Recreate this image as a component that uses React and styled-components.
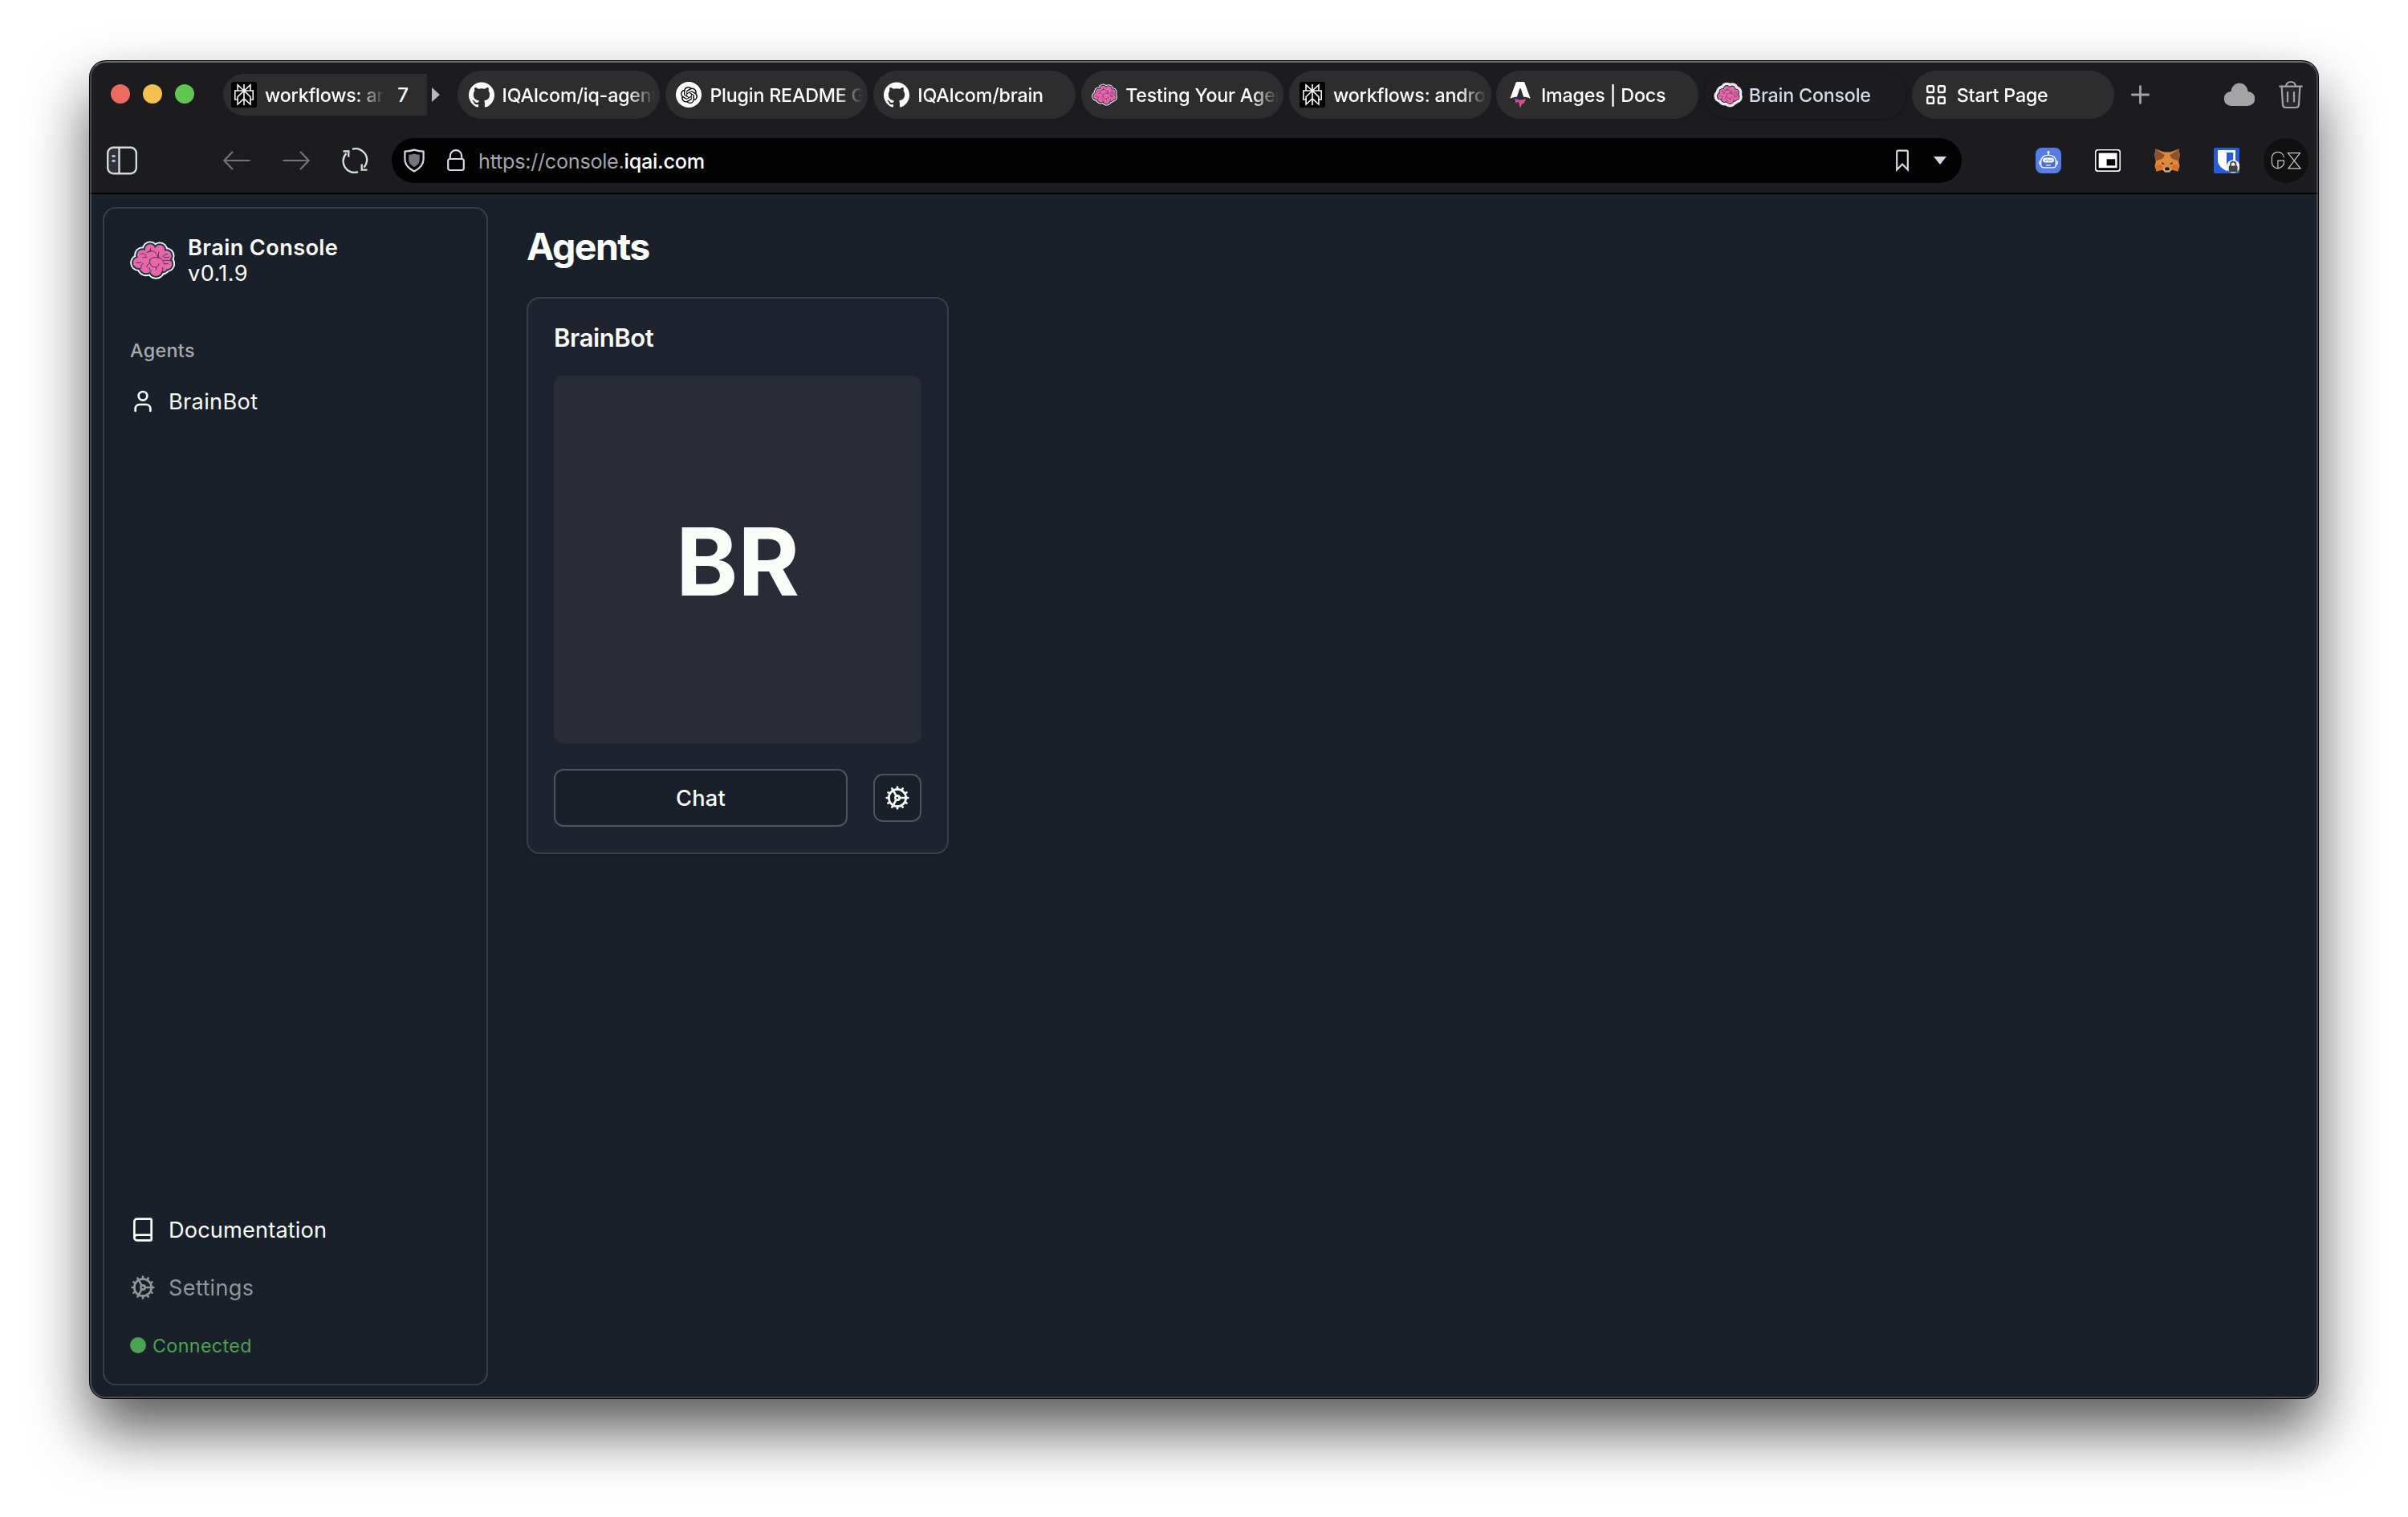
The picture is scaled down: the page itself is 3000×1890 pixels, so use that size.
import React from "react";
import styled, { createGlobalStyle, css } from "styled-components";
import { Book, Cog, User } from "lucide-react";
import { SiGithub, SiOpenai } from "react-icons/si";

const GlobalStyle = createGlobalStyle`
  * { box-sizing: border-box; }
  body {
    margin: 0;
    background: #fff;
    font-family: Inter, "Liberation Sans", sans-serif;
    -webkit-font-smoothing: antialiased;
  }
  svg { display: block; flex: none; }
`;

const colors = {
  chrome: "#1c1c1e",
  tab: "#2d2d2e",
  page: "#1a202a",
  card: "#1e232f",
  avatar: "#292c37",
  line: "#393f48",
  buttonLine: "#4e545c",
  text: "#fbfdf8",
};

const Desktop = styled.div`
  width: 3000px;
  height: 1890px;
  padding: 76px 112px 148px;
  overflow: hidden;
  background: #fff;
`;

const BrowserWindow = styled.div`
  position: relative;
  display: flex;
  flex-direction: column;
  height: 1666px;
  border-radius: 20px;
  overflow: hidden;
  background: ${colors.page};
  box-shadow: 0 0 0 1px #050505, 0 40px 76px rgba(0, 0, 0, 0.66);

  &::after {
    content: "";
    position: absolute;
    inset: 0;
    border-radius: inherit;
    border: 2px solid rgba(255, 255, 255, 0.2);
    border-top-color: rgba(255, 255, 255, 0.34);
    pointer-events: none;
  }
`;

const Chrome = styled.header`
  flex: none;
  height: 166px;
  background: ${colors.chrome};
  border-bottom: 2px solid #030304;
`;

const TabStrip = styled.div`
  display: flex;
  align-items: center;
  height: 84px;
  padding: 0 19px 0 26px;
`;

const Lights = styled.div`
  display: flex;
  gap: 16px;
  margin: 0 36px 2px 0;
`;

const Light = styled.span`
  width: 24px;
  height: 24px;
  border-radius: 50%;
  background: ${(p) => p.$color};
`;

const TabTitle = styled.span`
  flex: 1;
  min-width: 0;
  padding-top: 2px;
  overflow: hidden;
  white-space: nowrap;
  font-size: 23.25px;
  line-height: 32px;
  font-weight: 500;
  letter-spacing: -0.2px;
  mask-image: linear-gradient(to right, #000 calc(100% - 34px), transparent);
`;

const TabStack = styled.div`
  display: flex;
  align-items: center;
  width: 254px;
  height: 52px;
  padding: 0 23px 0 10px;
  gap: 10px;
  border-radius: 26px 0 0 26px;
  background: ${colors.tab};
  color: #fff;
`;

const StackCount = styled.span`
  padding: 1px 0 0 6px;
  font-size: 24px;
  font-weight: 500;
`;

const StackArrow = styled.span`
  margin: 0 22px 0 6px;
  border-left: 10px solid #b8b8b8;
  border-top: 9px solid transparent;
  border-bottom: 9px solid transparent;
`;

const Tabs = styled.div`
  display: flex;
  gap: 6.9px;
  margin-right: 21px;
`;

const Tab = styled.div`
  display: flex;
  align-items: center;
  gap: 10px;
  width: 252px;
  height: 60px;
  padding: 0 6px 0 13.5px;
  border-radius: 30px;
  background: ${colors.tab};
  color: #fff;
  ${(p) =>
    p.$active &&
    css`
      background: ${colors.chrome};
      color: #d5d9e3;
      box-shadow: 0 1px 4px rgba(0, 0, 0, 0.28);
    `}
`;

const Favicon = styled.span`
  display: flex;
  align-items: center;
  justify-content: center;
  flex: none;
  width: 32px;
  height: 32px;
  border-radius: ${(p) => (p.$round ? "50%" : "3px")};
  background: ${(p) => p.$bg || "transparent"};
  color: ${(p) => p.$fg || "#fff"};
`;

const StripActions = styled.div`
  display: flex;
  align-items: center;
  gap: 30px;
  margin-left: auto;
`;

const Toolbar = styled.div`
  display: flex;
  align-items: center;
  height: 80px;
  padding: 0 12px 0 21px;
`;

const NavButtons = styled.div`
  display: flex;
  align-items: center;
  gap: 40px;
  margin: 0 29px 0 107px;
`;

const AddressBar = styled.div`
  display: flex;
  align-items: center;
  flex: none;
  width: 1956px;
  height: 56px;
  padding: 0 19px 0 15px;
  border-radius: 28px;
  background: #020203;
`;

const Url = styled.span`
  margin: 0 auto 0 17px;
  padding-top: 2px;
  font-size: 25.2px;
  line-height: 32px;
  letter-spacing: -0.26px;
  color: #a4a6ac;
`;

const UrlHost = styled.span`
  font-weight: 500;
  color: #fff;
`;

const ShieldSlot = styled.span`
  margin-right: 28px;
`;

const CaretDown = styled.span`
  margin-left: 31px;
  border-top: 10px solid #d5d9e3;
  border-left: 8px solid transparent;
  border-right: 8px solid transparent;
`;

const Extensions = styled.div`
  display: flex;
  align-items: center;
  gap: 42px;
  margin: 0 30px 0 92px;
`;

const Profile = styled.div`
  display: flex;
  align-items: center;
  justify-content: center;
  width: 56px;
  height: 56px;
  border-radius: 50%;
  background: #101010;
`;

const Page = styled.div`
  display: flex;
  flex: 1;
  min-height: 0;
  padding: 16px;
  gap: 48px;
  background: ${colors.page};
  color: ${colors.text};
`;

const Sidebar = styled.aside`
  display: flex;
  flex-direction: column;
  flex: none;
  width: 480px;
  height: 1468px;
  padding: 16px;
  border: 2px solid ${colors.line};
  border-radius: 16px;
`;

const Brand = styled.div`
  display: flex;
  align-items: center;
  gap: 16px;
  height: 96px;
  padding: 0 16px;
`;

const BrandText = styled.div`
  display: flex;
  flex-direction: column;
  padding-top: 2px;
  font-size: 27.2px;
  line-height: 32px;
  letter-spacing: 0.36px;
`;

const BrandName = styled.span`
  font-weight: 600;
`;

const GroupLabel = styled.div`
  height: 64px;
  margin-top: 32px;
  padding: 0 16px;
  font-size: 23.25px;
  font-weight: 500;
  line-height: 65px;
  letter-spacing: 0.38px;
  color: #a9abaf;
`;

const NavItem = styled.a`
  display: flex;
  align-items: center;
  gap: 16px;
  height: 64px;
  padding: 0 16px;
  font-size: 27.2px;
  letter-spacing: ${(p) => p.$tracking || "0.3px"};
  opacity: ${(p) => (p.$muted ? 0.53 : 1)};
`;

const SidebarFooter = styled.div`
  display: flex;
  flex-direction: column;
  gap: 8px;
  margin-top: auto;
`;

const Status = styled.div`
  display: flex;
  align-items: center;
  gap: 8px;
  height: 64px;
  padding: 0 16px;
  font-size: 23.25px;
  letter-spacing: 0.38px;
  color: #4da254;
`;

const StatusDot = styled.span`
  width: 20px;
  height: 20px;
  border-radius: 50%;
  background: currentColor;
`;

const Main = styled.main`
  flex: 1;
  padding-top: 16px;
`;

const Heading = styled.h1`
  margin: 0 0 30px;
  font-size: 46.5px;
  line-height: 66px;
  font-weight: 700;
  letter-spacing: -1.6px;
`;

const Card = styled.section`
  display: flex;
  flex-direction: column;
  gap: 32px;
  width: 526px;
  padding: 32px;
  border: 2px solid ${colors.line};
  border-radius: 16px;
  background: ${colors.card};
  box-shadow: 0 2px 4px rgba(0, 0, 0, 0.12);
`;

const CardTitle = styled.h2`
  margin: 0;
  height: 32px;
  font-size: 31px;
  line-height: 34px;
  font-weight: 600;
  letter-spacing: -0.4px;
`;

const Avatar = styled.div`
  display: flex;
  align-items: center;
  justify-content: center;
  height: 458px;
  padding-top: 5px;
  border-radius: 12px;
  background: ${colors.avatar};
  font-size: 117px;
  font-weight: 700;
`;

const CardActions = styled.div`
  display: flex;
  align-items: center;
  gap: 32px;
`;

const Button = styled.button`
  display: flex;
  align-items: center;
  justify-content: center;
  padding: 0;
  border: 2px solid ${colors.buttonLine};
  border-radius: 12px;
  background: ${colors.page};
  color: ${colors.text};
  font: 500 27.2px Inter, sans-serif;
  letter-spacing: 0.3px;
  ${(p) =>
    p.$square
      ? css`
          width: 60px;
          height: 60px;
        `
      : css`
          flex: 1;
          height: 72px;
        `}
`;

const lobes = [
  [32, 82, 19], [46, 53, 18], [75, 32, 18], [111, 35, 18], [136, 56, 18],
  [137, 86, 19], [122, 98, 16], [97, 110, 21], [60, 98, 22], [75, 70, 35], [105, 75, 35],
];

const Lobes = ({ grow, fill }) => (
  <g fill={fill}>
    {lobes.map(([x, y, r], i) => (
      <circle key={i} cx={x} cy={y} r={r + grow} />
    ))}
  </g>
);

const Brain = ({ width, height, halo }) => (
  <svg width={width} height={height} viewBox={halo ? "-14 -12 196 168" : "0 0 168 144"}>
    {halo && <Lobes grow={25} fill="#e8e8ea" />}
    <Lobes grow={12.5} fill="#fff" />
    <Lobes grow={7} fill="#1d3449" />
    <Lobes grow={1} fill="#ec65a9" />
    <g fill="none" stroke="#1d3449" strokeWidth="2.6" strokeLinecap="round">
      <path d="M74 72c6-10 18-12 30-9 12 2 20 9 22 18M74 70c-2 16 6 30 22 29M98 108v-10c8-2 10-6 10-12" />
      <path d="M62 44c10-8 26-8 34 2 6 5 8 10 8 16M77 28v11M76 38l-8 4" />
      <path d="M38 50c10-6 20-2 22 8M48 62h14M108 42c-2 8-4 12 0 20" />
      <path d="M122 60c4-8 10-10 18-10M128 62l18-1M126 86h16M126 74c8-3 16 0 26 0" />
      <path d="M24 82h18M62 98c0-8 6-8 10-14M42 104c-2-8 0-16 8-20" />
      <path d="M80 114c-6-4-10-8-8-14M116 122c6-6 8-14 6-22" />
    </g>
  </svg>
);

const BurstMark = () => (
  <svg width="28" height="28" viewBox="0 0 24 24" fill="none" stroke="#f4f4f0" strokeWidth="1.4">
    <path d="M12 .8v22.4M5.2 1.6 12 7.7l6.8-6.1v6.1H5.2zM12 7.7H2.4v9.4h2.8M12 7.7h9.6v9.4h-2.8M12 7.7l-6.8 6.6v8l6.8-6.2 6.8 6.2v-8z" />
  </svg>
);

const AstroMark = () => (
  <svg width="32" height="32" viewBox="0 0 24 24">
    <defs>
      <linearGradient id="flame" x1="0" y1="0" x2="0.7" y2="1">
        <stop offset="0" stopColor="#b845d8" />
        <stop offset="1" stopColor="#ee5548" />
      </linearGradient>
    </defs>
    <path
      fill="url(#flame)"
      d="M8.358 20.162c-1.186-1.07-1.532-3.316-1.038-4.944.856 1.026 2.043 1.352 3.272 1.535 1.897.283 3.76.177 5.522-.678.202-.098.388-.229.608-.36.166.473.209.95.151 1.437-.14 1.185-.738 2.1-1.688 2.794-.38.277-.782.525-1.175.787-1.205.804-1.531 1.747-1.078 3.119l.044.148a3.158 3.158 0 0 1-1.407-1.188 3.31 3.31 0 0 1-.544-1.815c-.004-.32-.004-.642-.048-.958-.106-.769-.472-1.113-1.161-1.133-.707-.02-1.267.411-1.415 1.09-.012.053-.028.104-.043.166z"
    />
    <path
      fill="#fff"
      d="M2.397 15.717s3.24-1.575 6.49-1.575l2.451-7.565c.092-.366.36-.614.662-.614.302 0 .57.248.662.614l2.45 7.565c3.85 0 6.491 1.575 6.491 1.575L16.088.727C15.93.285 15.663 0 15.303 0H8.697c-.36 0-.615.285-.784.727z"
    />
  </svg>
);

const GridMark = () => (
  <svg width="32" height="32" viewBox="0 0 32 32" fill="none" stroke="#fff" strokeWidth="2.4">
    <rect x="5.2" y="5.2" width="7.8" height="7.8" rx="1.4" />
    <rect x="19" y="5.2" width="7.8" height="7.8" rx="1.4" />
    <rect x="5.2" y="19" width="7.8" height="7.8" rx="1.4" />
    <rect x="19" y="19" width="7.8" height="7.8" rx="1.4" />
  </svg>
);

const PlusMark = () => (
  <svg width="23" height="24" viewBox="0 0 23 24" stroke="#a3a3a3" strokeWidth="2.8" strokeLinecap="round">
    <path d="M11.5 1.6v20.8M1.4 12h20.2" />
  </svg>
);

const CloudMark = () => (
  <svg width="38" height="30" viewBox="0 0 38 30" fill="#a3a3a3">
    <path d="M9 29a9 9 0 0 1-.6-18A10.6 10.6 0 0 1 19 .6 10.6 10.6 0 0 1 29.6 11 9 9 0 0 1 29 29z" />
  </svg>
);

const TrashMark = () => (
  <svg width="30" height="36" viewBox="0 0 30 36" fill="none" stroke="#a3a3a3" strokeWidth="2.2" strokeLinecap="round">
    <path d="M3.6 8 5 30.5A3.8 3.8 0 0 0 8.8 34h12.4a3.8 3.8 0 0 0 3.8-3.5L26.4 8" fill="#28282a" />
    <path d="M1.2 7.6h27.6M9 7.2c.6-3.5 2.6-5.2 6-5.2s5.4 1.7 6 5.2M11 15v11.5M19 15v11.5" />
  </svg>
);

const PanelMark = () => (
  <svg width="38" height="36" viewBox="0 0 38 36" fill="none" stroke="#d5d9e3" strokeWidth="2.4">
    <path d="M2 8a6 6 0 0 1 6-6h7v32H8a6 6 0 0 1-6-6z" fill="#303238" stroke="none" />
    <rect x="1.2" y="1.8" width="35.6" height="32.4" rx="7" />
    <path d="M15.5 2v32M6.5 12.5h4M6.5 18.5h4" />
  </svg>
);

const ArrowMark = ({ flip }) => (
  <svg width="34" height="24" viewBox="0 0 34 24" fill="none" stroke="#747478" strokeWidth="2.2" strokeLinecap="round" strokeLinejoin="round">
    <path d={flip ? "M1.2 12h31.4M22.5 1.5 32.8 12 22.5 22.5" : "M32.8 12H1.4M11.5 1.5 1.2 12l10.3 10.5"} />
  </svg>
);

const ReloadMark = () => (
  <svg width="33" height="32" viewBox="0 0 33 32" fill="none" stroke="#d5d9e3" strokeWidth="2.4">
    <path d="M13 1.8a14 14 0 0 1 14.5 22.8M20 30.2A14 14 0 0 1 5.5 7.2" />
    <path d="M1.5 4.5h6.8v7M31.5 27.6h-6.8v-7" />
  </svg>
);

const ShieldMark = () => (
  <svg width="26" height="30" viewBox="0 0 26 30" fill="none" stroke="#d5d9e3" strokeWidth="2.2" strokeLinejoin="round">
    <path d="M13 1.6c4 1.4 8 2 11.6 2v9.4c0 7-4.6 12-11.6 15.4C6 25 1.4 20 1.4 13V3.6c3.6 0 7.6-.6 11.6-2z" />
    <path d="M13 6.6c2.4.8 4.6 1.2 6.8 1.2v5.6c0 4.4-2.6 7.4-6.8 9.8-4.2-2.4-6.8-5.4-6.8-9.8V7.8c2.2 0 4.4-.4 6.8-1.2z" fill="#72757c" stroke="none" />
  </svg>
);

const LockMark = () => (
  <svg width="22" height="28" viewBox="0 0 22 28" fill="none" stroke="#d5d9e3" strokeWidth="2.2">
    <rect x="1.2" y="12" width="19.6" height="14" rx="2.5" />
    <path d="M3.8 12V8.4a7.2 7.2 0 0 1 14.4 0V12" />
  </svg>
);

const BookmarkMark = () => (
  <svg width="16" height="28" viewBox="0 0 16 28" fill="none" stroke="#d5d9e3" strokeWidth="2.2">
    <path d="M1.2 25.5V3a1.4 1.4 0 0 1 1.4-1.4h10.8A1.4 1.4 0 0 1 14.8 3v22.5L8 18.6z" />
  </svg>
);

const RobotMark = () => (
  <svg width="32" height="32" viewBox="0 0 32 32">
    <rect width="32" height="32" rx="8" fill="#567ce6" />
    <g fill="none" stroke="#fff" strokeWidth="1.4">
      <path d="M6.6 18.5c0-6 3-9.3 9.4-9.3s9.4 3.300 9.400 9.300V21c0 2.600-1.600 3.900-4.200 3.900H10.800c-2.600 0-4.200-1.300-4.200-3.900z" fill="#4a6fd6" />
      <path d="M16 9V6M6 16.400c-1.600.6-1.600 4.200 0 4.800M26 16.400c1.600.6 1.600 4.200 0 4.800M13 21.900h6" />
    </g>
    <circle cx="16" cy="5.6" r="1.6" fill="#fff" />
    <rect x="9" y="12.4" width="14" height="6.2" rx="3" fill="#fff" />
    <path d="M11.5 15.800h2l1.200-1.200 1.800 2.200 1.400-1.200h2.600" fill="none" stroke="#567ce6" strokeWidth="1" />
  </svg>
);

const PipMark = () => (
  <svg width="32" height="28" viewBox="0 0 32 28">
    <rect width="32" height="28" rx="3.5" fill="#f2f2f2" />
    <rect x="1.6" y="1.6" width="28.8" height="24.6" rx="2.6" fill="#000" />
    <rect x="4.6" y="4.6" width="23" height="18.6" fill="#fff" />
    <rect x="14.6" y="12.3" width="10.6" height="8" fill="#000" />
  </svg>
);

const FoxMark = () => (
  <svg width="32" height="30" viewBox="0 0 32 30">
    <path fill="#e2883b" d="M1.6.4 12 4.5h8L30.4.4l1.4 8-1.7 8 1.5 5-2.2 7-7.4-1.8-3 2.7h-6l-3-2.7-7.4 1.8-2.2-7 1.5-5-1.7-8z" />
    <path fill="#8c5330" d="M1.6.4 13 8.3l-2.6 4.3-8.5 3-1.7-7zM30.4.4 19 8.3l2.6 4.3 8.5 3 1.7-7z" />
    <path fill="#d67428" d="m1.4 20.4 8-.4 1.2 6.4-8 2zM30.6 20.4l-8-.4-1.2 6.4 8 2z" />
    <path fill="#3d3f46" d="m9 17 3.4 1.6-.4 1.4-2.8-.8zM23 17l-3.4 1.6.4 1.4 2.8-.8z" />
    <path fill="#c9b8a5" d="m11 25.5 2.4-1.2h5.2l2.4 1.2-1.8 4h-6.4z" />
    <path fill="#15171a" d="m13.4 24.2 1-.8h3.2l1 .8.2 3h-5.6z" />
  </svg>
);

const VaultMark = () => (
  <svg width="32" height="32" viewBox="0 0 32 32">
    <rect width="32" height="32" rx="1.8" fill="#2a5bd7" />
    <path fill="#fff" d="M5 3h22v12.5c0 6.5-5 10.5-11 13.5C10 26 5 22 5 15.5z" />
    <path fill="#2a5bd7" d="M16 6h8.2v9.5c0 4.5-3.4 7.5-8.2 10z" />
    <circle cx="24.2" cy="23.4" r="8.2" fill="#f5f5f6" />
    <path d="M21 23v-2.2a3.2 3.2 0 0 1 6.4 0V23" fill="none" stroke="#404246" strokeWidth="1.8" />
    <rect x="18.8" y="22.4" width="10.8" height="7.8" rx="1.2" fill="#404246" />
  </svg>
);

const ProfileMark = () => (
  <svg width="38" height="22" viewBox="0 0 38 22" fill="none" stroke="#c9c9c9" strokeWidth="1.2">
    <path d="M16.4 7.2A7.5 7.5 0 0 0 1.4 8.5v5a7.5 7.5 0 0 0 7.5 7.300v-9.600h7.500a8 8 0 0 1-7.500 9.600" />
    <path d="M21.5 1.6h15L22 20.8h15z" />
  </svg>
);

const BurstIcon = (
  <Favicon $bg="#000">
    <BurstMark />
  </Favicon>
);

const GithubIcon = (
  <Favicon>
    <SiGithub size={32} />
  </Favicon>
);

const tabs = [
  { title: "IQAIcom/iq-agent", icon: GithubIcon },
  {
    title: "Plugin README G",
    icon: (
      <Favicon $bg="#fff" $fg="#000" $round>
        <SiOpenai size={21} />
      </Favicon>
    ),
  },
  { title: "IQAIcom/brain", icon: GithubIcon },
  {
    title: "Testing Your Agen",
    icon: (
      <Favicon>
        <Brain width={32} height={28} />
      </Favicon>
    ),
  },
  { title: "workflows: andro", icon: BurstIcon },
  {
    title: "Images | Docs",
    icon: (
      <Favicon>
        <AstroMark />
      </Favicon>
    ),
  },
  {
    title: "Brain Console",
    active: true,
    icon: (
      <Favicon>
        <Brain width={36} height={32} halo />
      </Favicon>
    ),
  },
  {
    title: "Start Page",
    icon: (
      <Favicon>
        <GridMark />
      </Favicon>
    ),
  },
];

export default function App() {
  return (
    <Desktop>
      <GlobalStyle />
      <BrowserWindow>
        <Chrome>
          <TabStrip>
            <Lights>
              <Light $color="#ec6a5e" />
              <Light $color="#f4bf4f" />
              <Light $color="#61c554" />
            </Lights>
            <TabStack>
              {BurstIcon}
              <TabTitle>workflows: an</TabTitle>
              <StackCount>7</StackCount>
            </TabStack>
            <StackArrow />
            <Tabs>
              {tabs.map((tab, i) => (
                <Tab key={i} $active={tab.active}>
                  {tab.icon}
                  <TabTitle>{tab.title}</TabTitle>
                </Tab>
              ))}
            </Tabs>
            <PlusMark />
            <StripActions>
              <CloudMark />
              <TrashMark />
            </StripActions>
          </TabStrip>
          <Toolbar>
            <PanelMark />
            <NavButtons>
              <ArrowMark />
              <ArrowMark flip />
              <ReloadMark />
            </NavButtons>
            <AddressBar>
              <ShieldSlot>
                <ShieldMark />
              </ShieldSlot>
              <LockMark />
              <Url>
                https://console.<UrlHost>iqai.com</UrlHost>
              </Url>
              <BookmarkMark />
              <CaretDown />
            </AddressBar>
            <Extensions>
              <RobotMark />
              <PipMark />
              <FoxMark />
              <VaultMark />
            </Extensions>
            <Profile>
              <ProfileMark />
            </Profile>
          </Toolbar>
        </Chrome>
        <Page>
          <Sidebar>
            <Brand>
              <Brain width={56} height={48} />
              <BrandText>
                <BrandName>Brain Console</BrandName>
                <span>v0.1.9</span>
              </BrandText>
            </Brand>
            <GroupLabel>Agents</GroupLabel>
            <NavItem>
              <User size={32} />
              BrainBot
            </NavItem>
            <SidebarFooter>
              <NavItem $tracking="0.14px">
                <Book size={32} />
                Documentation
              </NavItem>
              <NavItem $muted>
                <Cog size={32} />
                Settings
              </NavItem>
              <Status>
                <StatusDot />
                Connected
              </Status>
            </SidebarFooter>
          </Sidebar>
          <Main>
            <Heading>Agents</Heading>
            <Card>
              <CardTitle>BrainBot</CardTitle>
              <Avatar>BR</Avatar>
              <CardActions>
                <Button>Chat</Button>
                <Button $square>
                  <Cog size={32} />
                </Button>
              </CardActions>
            </Card>
          </Main>
        </Page>
      </BrowserWindow>
    </Desktop>
  );
}
